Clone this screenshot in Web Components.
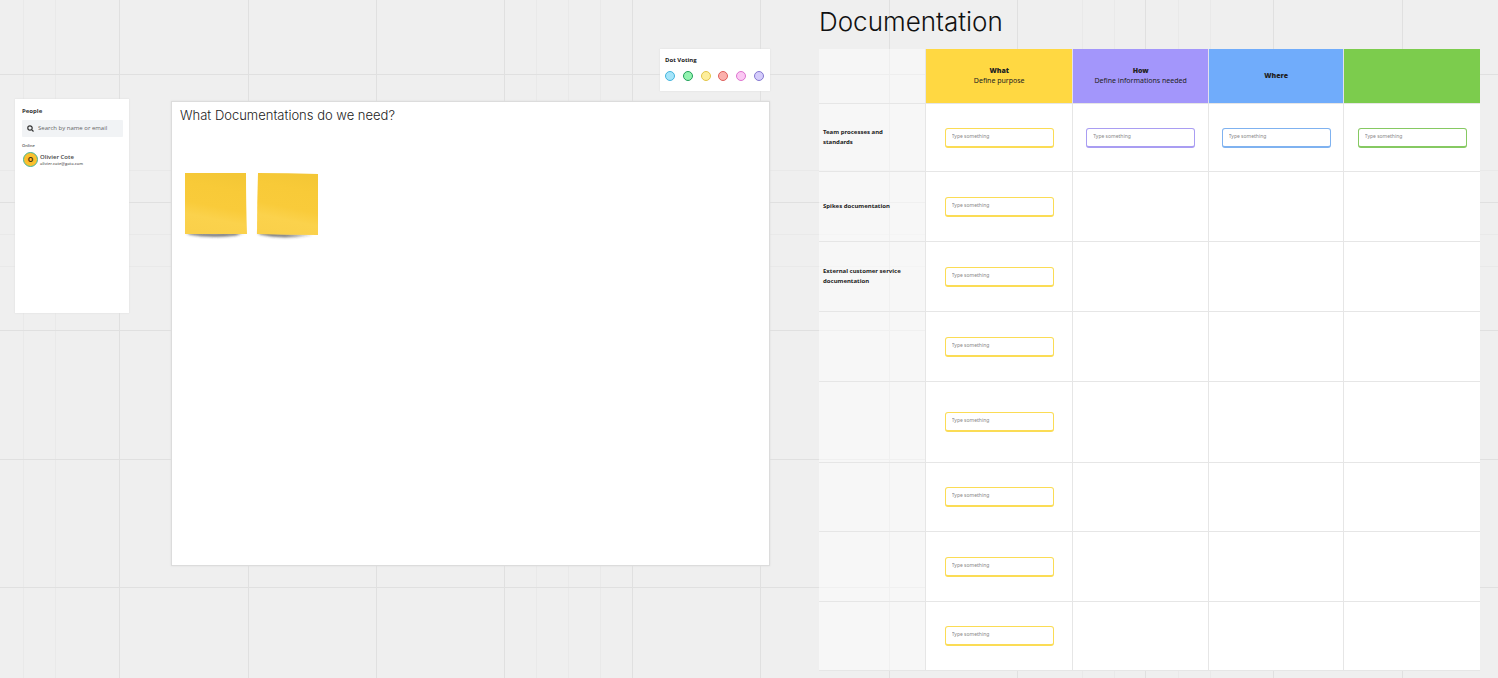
<!DOCTYPE html>
<html lang="en">
<head>
<meta charset="utf-8">
<meta name="viewport" content="width=device-width, initial-scale=1">
<title>Documentation board</title>
<style>
  body { margin: 0; background: #efefef; color: #222; font-family: "Open Sans", sans-serif; }
</style>
</head>
<body>
<board-canvas>
  <people-panel slot="people"></people-panel>
  <dot-voting slot="work"></dot-voting>
  <board-frame slot="work" heading="What Documentations do we need?">
    <sticky-note shape="a"></sticky-note>
    <sticky-note shape="b"></sticky-note>
  </board-frame>
  <doc-matrix slot="doc"></doc-matrix>
</board-canvas>

<script>
class BoardElement extends HTMLElement {
  connectedCallback() {
    if (this.shadowRoot) return;
    this.attachShadow({ mode: "open" }).innerHTML = this.render();
  }
}

const gridLine = (axis, at, color) => axis === "x"
  ? `<line x1="${at}.5" x2="${at}.5" y1="0" y2="100%" stroke="${color}"/>`
  : `<line x1="0" x2="100%" y1="${at}.5" y2="${at}.5" stroke="${color}"/>`;

customElements.define("board-canvas", class extends BoardElement {
  render() {
    const major = "#e0e0e0", minor = "#e9e9e9";
    const lines = [
      ...[23, 55, 536, 568, 600, 1082, 1114, 1178, 1210].map(v => gridLine("x", v, minor)),
      ...[170, 234, 266].map(v => gridLine("y", v, minor)),
      ...[119, 248, 376, 504, 632, 760, 889, 1017, 1145, 1273, 1402].map(v => gridLine("x", v, major)),
      ...[74, 202, 330, 459, 587].map(v => gridLine("y", v, major)),
    ].join("");
    return `
      <style>
        :host { display: block; position: relative; min-height: 100vh; overflow: hidden; }
        .grid { position: absolute; inset: 0; width: 100%; height: 100%; }
        main { position: relative; display: flex; align-items: flex-start; padding: 0 18px 7px 15px; }
        .people { flex: none; width: 114px; margin-top: 99px; }
        .work { flex: 599 1 0; margin: 49px 49px 0 42px; display: flex; flex-direction: column; gap: 10px; }
        .doc { flex: 661 1 0; min-width: 0; }
      </style>
      <svg class="grid" aria-hidden="true">${lines}</svg>
      <main>
        <div class="people"><slot name="people"></slot></div>
        <div class="work"><slot name="work"></slot></div>
        <div class="doc"><slot name="doc"></slot></div>
      </main>`;
  }
});

customElements.define("people-panel", class extends BoardElement {
  render() {
    return `
      <style>
        :host { display: block; box-sizing: border-box; min-height: 214px; padding: 8px 6px 7px 7px; background: #fff; box-shadow: 0 0 2px #dcdcdc; }
        h2 { margin: 0 0 4px; font-size: 6px; line-height: 9px; font-weight: 700; color: #333; }
        label { display: flex; align-items: center; gap: 4px; height: 17px; padding: 0 5px; background: #f1f3f5; border-radius: 1px; }
        label svg { flex: none; width: 7px; height: 7px; }
        input { flex: 1; min-width: 0; padding: 0; border: 0; outline: 0; background: none; font: 6px/9px "Open Sans", sans-serif; color: #555; }
        input::placeholder { color: #666; opacity: 1; }
        h3 { margin: 6px 0 3px; font-size: 4px; line-height: 6px; font-weight: 600; color: #555; }
        .person { display: flex; align-items: center; gap: 2px; padding-left: 1px; }
        .avatar { box-sizing: border-box; width: 15px; height: 15px; border: 1px solid #45b59a; border-radius: 50%; background: #fbc02d; color: #4a3210; font-size: 7px; line-height: 13px; font-weight: 700; text-align: center; }
        .name { font-size: 6px; line-height: 8px; font-weight: 600; color: #444; }
        .mail { font-size: 4px; line-height: 6px; font-weight: 600; color: #666; }
      </style>
      <h2>People</h2>
      <label>
        <svg viewBox="0 0 14 14" fill="none" stroke="#333" stroke-width="2.4" aria-hidden="true"><circle cx="6" cy="6" r="4.4"/><path d="M9.2 9.2 13 13"/></svg>
        <input type="search" placeholder="Search by name or email" aria-label="Search by name or email">
      </label>
      <h3>Online</h3>
      <div class="person">
        <div class="avatar">O</div>
        <div><div class="name">Olivier Cote</div><div class="mail">olivier.cote@goto.com</div></div>
      </div>`;
  }
});

customElements.define("dot-voting", class extends BoardElement {
  render() {
    const dots = [["Blue", "#a5e5fa", "#45b4dc"], ["Green", "#93f3b0", "#22a05a"], ["Yellow", "#fdee9c", "#e2c548"],
      ["Red", "#fbb0ac", "#dd5f5c"], ["Pink", "#fbc8f3", "#dd74cf"], ["Violet", "#d5ccfb", "#8478d0"]];
    return `
      <style>
        :host { display: block; box-sizing: border-box; width: 110px; height: 42px; align-self: flex-end; padding: 7px 6px 0 5px; background: #fff; box-shadow: 0 0 2px #dcdcdc; }
        h2 { margin: 0 0 6px; font-size: 6px; line-height: 9px; font-weight: 700; color: #222; }
        .dots { display: flex; justify-content: space-between; }
        button { box-sizing: border-box; width: 10px; height: 10px; padding: 0; border: 1px solid var(--edge); border-radius: 50%; background: var(--fill); }
      </style>
      <h2>Dot Voting</h2>
      <div class="dots">${dots.map(([n, f, e]) => `<button type="button" aria-label="${n} dot" style="--fill:${f};--edge:${e}"></button>`).join("")}</div>`;
  }
});

customElements.define("board-frame", class extends BoardElement {
  render() {
    return `
      <style>
        :host { display: block; box-sizing: border-box; min-height: 465px; padding: 3px 8px; border: 1px solid #dcdcdc; background: #fff; box-shadow: 0 0 2px #ddd; }
        h2 { margin: 0 0 47px; font: 300 13px/20px Inter, sans-serif; color: #222; }
        .notes { display: flex; gap: 8px; padding-left: 4px; }
      </style>
      <h2>${this.getAttribute("heading")}</h2>
      <div class="notes"><slot></slot></div>`;
  }
});

customElements.define("sticky-note", class extends BoardElement {
  render() {
    const b = this.getAttribute("shape") === "b";
    const paper = b ? "M2 1Q32 1 62 2V63Q30 63 1 62Q1 30 2 1Z" : "M1 1H62Q62 34 63 62H1Q1 34 1 1Z";
    const shade = b ? "M2 60Q30 64 56 62L50 63Q26 67 4 62Z" : "M3 60Q30 64 60 60L52 63Q26 66 5 62Z";
    return `
      <style>
        :host { display: block; width: 64px; height: 72px; }
        svg { display: block; width: 100%; height: 100%; }
      </style>
      <svg viewBox="0 0 64 72" role="img" aria-label="Empty note">
        <defs>
          <linearGradient id="g" x1=".6" y1="0" x2=".4" y2="1">
            <stop offset="0" stop-color="#f4c736"/><stop offset=".25" stop-color="#f8ca38"/><stop offset=".55" stop-color="#f9cb3a"/><stop offset=".75" stop-color="#fbd24c"/><stop offset="1" stop-color="#fad04a"/>
          </linearGradient>
          <filter id="s" x="-20%" y="-100%" width="140%" height="300%"><feGaussianBlur stdDeviation="1.6"/></filter>
        </defs>
        <path d="${shade}" fill="#333" filter="url(#s)"/>
        <path d="${paper}" fill="url(#g)"/>
      </svg>`;
  }
});

customElements.define("text-entry", class extends BoardElement {
  render() {
    return `
      <style>
        :host { display: block; width: 109px; margin: 0 auto; }
        input { display: block; box-sizing: border-box; width: 100%; height: 20px; padding: 0 6px 3px; border: 1px solid var(--accent); border-bottom-width: 2px; border-radius: 3px; outline: 0; background: #fff; font: 5px/8px "Noto Sans", sans-serif; color: #444; }
        input::placeholder { color: #888; opacity: 1; }
      </style>
      <input type="text" placeholder="Type something" aria-label="${this.getAttribute("label")}">`;
  }
});

customElements.define("doc-matrix", class extends BoardElement {
  render() {
    const columns = [["What", "Define purpose", "#ffd842"], ["How", "Define informations needed", "#a396fb"],
      ["Where", "", "#70acfb"], ["", "", "#7ccc4d"]];
    const edges = ["#fbdc55", "#a99df2", "#7fb2f0", "#86c962"];
    const rows = [["Team processes and standards", 68, 4], ["Spikes documentation", 70, 1], ["External customer service documentation", 70, 1],
      ["", 70, 1], ["", 81, 1], ["", 69, 1], ["", 70, 1], ["", 69, 1]];
    const head = columns.map(([t, s, c]) => `<th scope="col" style="background:${c}"><b>${t}</b>${s ? `<span>${s}</span>` : ""}</th>`).join("");
    const body = rows.map(([name, h, n], r) => `<tr style="height:${h}px"><th scope="row">${name}</th>${columns.map((c, i) =>
      `<td>${i < n ? `<text-entry label="${c[0] || "Other"}, row ${r + 1}" style="--accent:${edges[i]}"></text-entry>` : ""}</td>`).join("")}</tr>`).join("");
    return `
      <style>
        :host { display: block; font-family: "Noto Sans", sans-serif; }
        h1 { margin: 0; height: 49px; font: 300 26px/44px Inter, sans-serif; color: #111; }
        table { width: 100%; table-layout: fixed; border-collapse: separate; border-spacing: 0; }
        col.name { width: 107px; } col.first { width: 22.3%; }
        th, td { box-sizing: border-box; padding: 0; border: 0 solid #e6e6e6; border-bottom-width: 1px; border-right-width: 1px; vertical-align: middle; }
        th:last-child, td:last-child { border-right: 0; }
        td { background: #fff; }
        thead tr { height: 55px; }
        thead th { border-right-color: #e2e0ee; font-size: 7px; line-height: 10px; color: #222; }
        thead td { background: rgba(255, 255, 255, .45); }
        thead b, thead span { display: block; }
        thead span { font-weight: 400; }
        tbody th { padding: 0 12px 1px 4px; background: rgba(255, 255, 255, .5); text-align: left; font-size: 6px; line-height: 10px; font-weight: 700; color: #222; }
      </style>
      <h1>Documentation</h1>
      <table>
        <colgroup><col class="name"><col class="first"><col><col><col></colgroup>
        <thead><tr><td></td>${head}</tr></thead>
        <tbody>${body}</tbody>
      </table>`;
  }
});
</script>
</body>
</html>
